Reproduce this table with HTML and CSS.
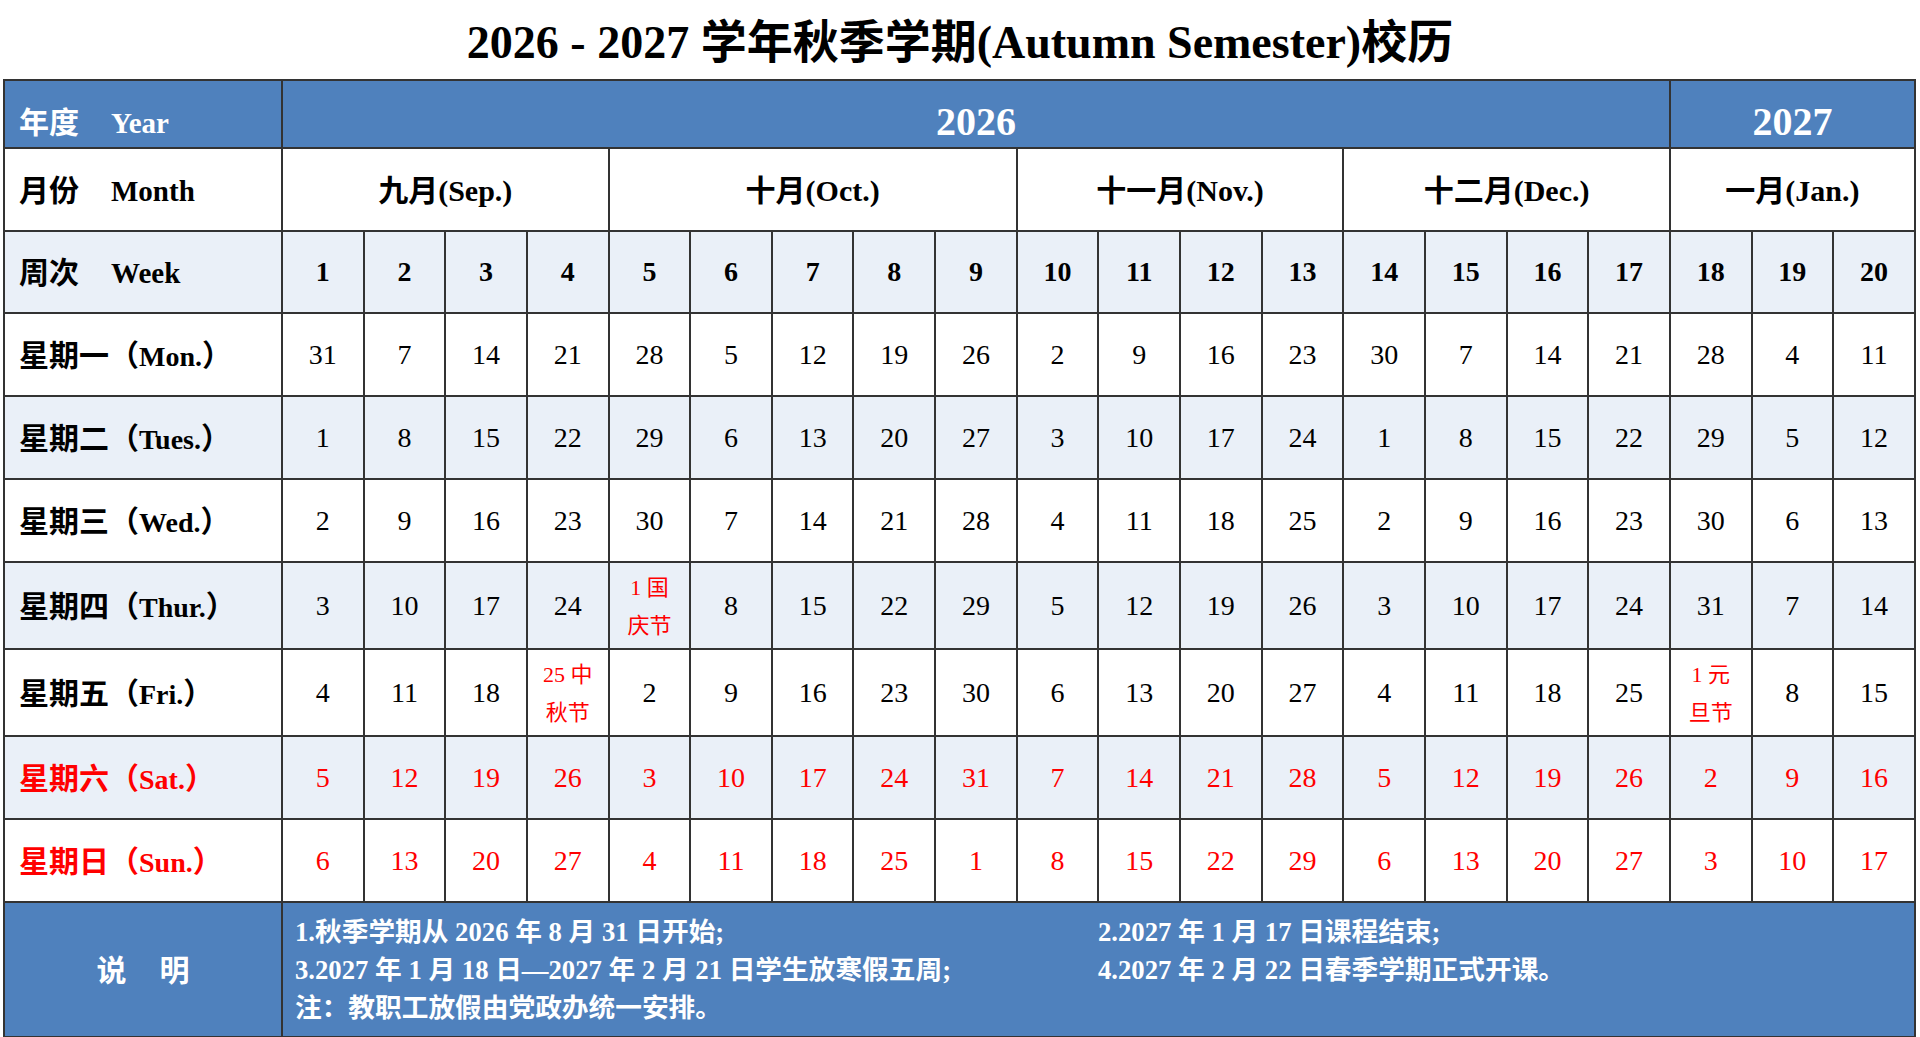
FILE: index.html
```html
<!DOCTYPE html>
<html lang="zh-CN">
<head>
<meta charset="utf-8">
<title>2026 - 2027 学年秋季学期校历</title>
<link rel="stylesheet" href="styles.css">
</head>
<body>
<h1 class="title">2026 - 2027 学年秋季学期(Autumn Semester)校历</h1>
<table class="cal">
  <colgroup><col class="c-label"><col span="20"></colgroup>
  <tr class="r-year">
    <th class="lbl"><span class="zh">年度</span><span class="en">Year</span></th>
    <th colspan="17">2026</th>
    <th colspan="3">2027</th>
  </tr>
  <tr class="r-month">
    <th class="lbl"><span class="zh">月份</span><span class="en">Month</span></th>
    <th colspan="4"><span class="zh">九月</span>(Sep.)</th>
    <th colspan="5"><span class="zh">十月</span>(Oct.)</th>
    <th colspan="4"><span class="zh">十一月</span>(Nov.)</th>
    <th colspan="4"><span class="zh">十二月</span>(Dec.)</th>
    <th colspan="3"><span class="zh">一月</span>(Jan.)</th>
  </tr>
  <tr class="r-week alt">
    <th class="lbl"><span class="zh">周次</span><span class="en">Week</span></th>
    <th>1</th><th>2</th><th>3</th><th>4</th><th>5</th><th>6</th><th>7</th><th>8</th><th>9</th><th>10</th>
    <th>11</th><th>12</th><th>13</th><th>14</th><th>15</th><th>16</th><th>17</th><th>18</th><th>19</th><th>20</th>
  </tr>
  <tr class="r-day">
    <th class="lbl"><span class="zh">星期一（</span>Mon.<span class="zh">）</span></th>
    <td>31</td><td>7</td><td>14</td><td>21</td><td>28</td><td>5</td><td>12</td><td>19</td><td>26</td><td>2</td>
    <td>9</td><td>16</td><td>23</td><td>30</td><td>7</td><td>14</td><td>21</td><td>28</td><td>4</td><td>11</td>
  </tr>
  <tr class="r-day alt">
    <th class="lbl"><span class="zh">星期二（</span>Tues.<span class="zh">）</span></th>
    <td>1</td><td>8</td><td>15</td><td>22</td><td>29</td><td>6</td><td>13</td><td>20</td><td>27</td><td>3</td>
    <td>10</td><td>17</td><td>24</td><td>1</td><td>8</td><td>15</td><td>22</td><td>29</td><td>5</td><td>12</td>
  </tr>
  <tr class="r-day">
    <th class="lbl"><span class="zh">星期三（</span>Wed.<span class="zh">）</span></th>
    <td>2</td><td>9</td><td>16</td><td>23</td><td>30</td><td>7</td><td>14</td><td>21</td><td>28</td><td>4</td>
    <td>11</td><td>18</td><td>25</td><td>2</td><td>9</td><td>16</td><td>23</td><td>30</td><td>6</td><td>13</td>
  </tr>
  <tr class="r-day r-tall alt">
    <th class="lbl"><span class="zh">星期四（</span>Thur.<span class="zh">）</span></th>
    <td>3</td><td>10</td><td>17</td><td>24</td><td class="hol">1 国<br>庆节</td><td>8</td><td>15</td><td>22</td><td>29</td><td>5</td>
    <td>12</td><td>19</td><td>26</td><td>3</td><td>10</td><td>17</td><td>24</td><td>31</td><td>7</td><td>14</td>
  </tr>
  <tr class="r-day r-tall">
    <th class="lbl"><span class="zh">星期五（</span>Fri.<span class="zh">）</span></th>
    <td>4</td><td>11</td><td>18</td><td class="hol">25 中<br>秋节</td><td>2</td><td>9</td><td>16</td><td>23</td><td>30</td><td>6</td>
    <td>13</td><td>20</td><td>27</td><td>4</td><td>11</td><td>18</td><td>25</td><td class="hol">1 元<br>旦节</td><td>8</td><td>15</td>
  </tr>
  <tr class="r-day r-red alt">
    <th class="lbl"><span class="zh">星期六（</span>Sat.<span class="zh">）</span></th>
    <td>5</td><td>12</td><td>19</td><td>26</td><td>3</td><td>10</td><td>17</td><td>24</td><td>31</td><td>7</td>
    <td>14</td><td>21</td><td>28</td><td>5</td><td>12</td><td>19</td><td>26</td><td>2</td><td>9</td><td>16</td>
  </tr>
  <tr class="r-day r-red">
    <th class="lbl"><span class="zh">星期日（</span>Sun.<span class="zh">）</span></th>
    <td>6</td><td>13</td><td>20</td><td>27</td><td>4</td><td>11</td><td>18</td><td>25</td><td>1</td><td>8</td>
    <td>15</td><td>22</td><td>29</td><td>6</td><td>13</td><td>20</td><td>27</td><td>3</td><td>10</td><td>17</td>
  </tr>
  <tr class="r-notes">
    <th class="notes-lbl"><span class="zh">说</span><span class="zh gap">明</span></th>
    <td colspan="20" class="notes">
      <div class="notes-grid">
        <p>1.秋季学期从 2026 年 8 月 31 日开始;</p>
        <p>2.2027 年 1 月 17 日课程结束;</p>
        <p>3.2027 年 1 月 18 日—2027 年 2 月 21 日学生放寒假五周;</p>
        <p>4.2027 年 2 月 22 日春季学期正式开课。</p>
        <p>注：教职工放假由党政办统一安排。</p>
      </div>
    </td>
  </tr>
</table>
</body>
</html>
```
FILE: styles.css
```css
html, body {
  margin: 0;
  padding: 0;
  background: #ffffff;
}

body {
  font-family: "Liberation Serif", "Noto Sans CJK SC", serif;
  color: #000;
  width: 1920px;
  height: 1037px;
  overflow: hidden;
}

.title {
  margin: 0;
  height: 79px;
  box-sizing: border-box;
  padding-top: 8px;
  line-height: 70px;
  font-size: 46px;
  font-weight: 700;
  text-align: center;
  white-space: nowrap;
}

.cal {
  border-collapse: collapse;
  table-layout: fixed;
  width: 1913px;
  margin-left: 3px;
}

.c-label {
  width: 278px;
}

.cal th,
.cal td {
  border: 2px solid #333;
  padding: 0;
  text-align: center;
  vertical-align: middle;
  font-size: 28px;
  line-height: 32px;
  white-space: nowrap;
  overflow: hidden;
}

.cal th {
  font-weight: 700;
}

.cal td {
  font-weight: 400;
}

.zh {
  font-family: "Noto Sans CJK SC", sans-serif;
  font-weight: 700;
  font-size: 30px;
}

.lbl {
  text-align: left !important;
  padding-left: 14px !important;
}

.lbl .en {
  margin-left: 32px;
  font-size: 29px;
}

/* row backgrounds */
.r-year,
.r-notes {
  background: #4f81bd;
  color: #fff;
}

.alt {
  background: #eaf0f8;
}

/* year row */
.r-year {
  height: 68px;
}

.r-year th {
  vertical-align: bottom;
  padding-bottom: 3px;
  font-size: 40px;
  line-height: 44px;
}

.r-year .lbl {
  font-size: 29px;
  padding-bottom: 2px;
}

.r-year .lbl .zh {
  font-size: 30px;
}

/* month row */
.r-month {
  height: 83px;
}

.r-month th {
  font-size: 30px;
}

.r-week {
  height: 82px;
}

.r-day {
  height: 83px;
}

.r-tall {
  height: 87px;
}

.r-red th,
.r-red td {
  color: #ff0000;
}

.cal td.hol {
  color: #ff0000;
  font-size: 22px;
  line-height: 38px;
  padding-top: 2px;
}

/* notes */
.r-notes {
  height: 135px;
}

.notes-lbl {
  font-size: 30px;
}

.notes-lbl .gap {
  margin-left: 33px;
}

.cal td.notes {
  text-align: left;
  padding-left: 12px;
  font-weight: 700;
  font-size: 26px;
}

.notes-grid {
  display: grid;
  grid-template-columns: 803px 1fr;
  font-family: "Liberation Serif", "Noto Sans CJK SC", serif;
}

.notes-grid p {
  margin: 0;
  line-height: 38px;
  font-size: 26.7px;
}
```
